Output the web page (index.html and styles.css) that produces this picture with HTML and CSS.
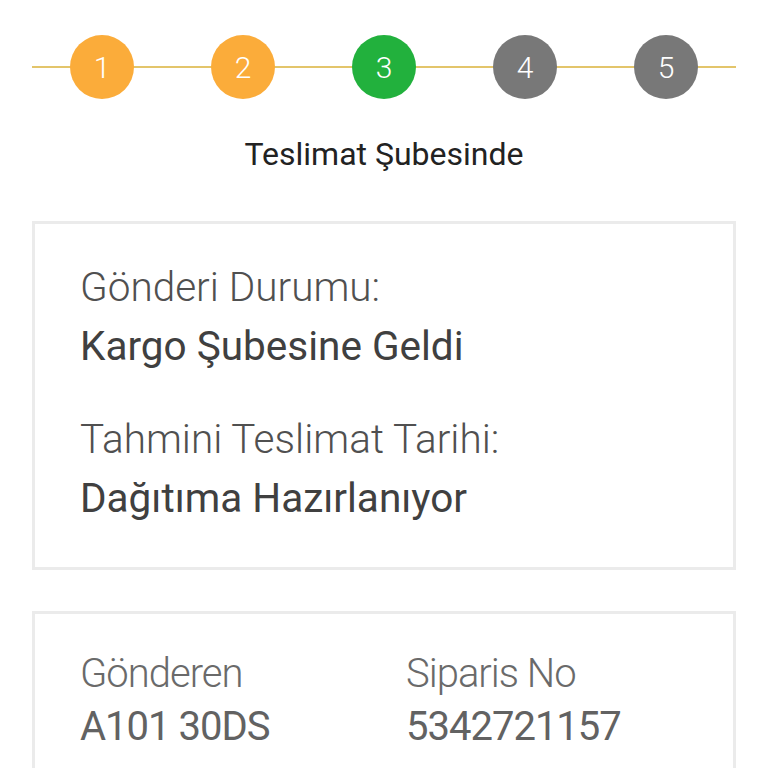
FILE: index.html
```html
<!DOCTYPE html>
<html lang="tr">
<head>
<meta charset="utf-8">
<link rel="stylesheet" href="styles.css">
</head>
<body>
<div class="page">
  <div class="stepper">
    <div class="step done">1</div>
    <div class="step done">2</div>
    <div class="step current">3</div>
    <div class="step todo">4</div>
    <div class="step todo">5</div>
  </div>
  <div class="status-title">Teslimat Şubesinde</div>
  <div class="card status-card">
    <div class="group">
      <div class="label">Gönderi Durumu:</div>
      <div class="value">Kargo Şubesine Geldi</div>
    </div>
    <div class="group">
      <div class="label">Tahmini Teslimat Tarihi:</div>
      <div class="value">Dağıtıma Hazırlanıyor</div>
    </div>
  </div>
  <div class="card info-card">
    <div class="col">
      <div class="info-label">Gönderen</div>
      <div class="info-value">A101 30DS</div>
    </div>
    <div class="col">
      <div class="info-label">Siparis No</div>
      <div class="info-value">5342721157</div>
    </div>
  </div>
</div>
</body>
</html>
```
FILE: styles.css
```css
html, body {
  margin: 0;
  padding: 0;
  background: #ffffff;
  font-family: Roboto, "Noto Sans", "Liberation Sans", sans-serif;
  overflow: hidden;
}
.page {
  padding: 35px 32px 0 32px;
}
.stepper {
  position: relative;
  display: flex;
  justify-content: space-between;
  padding: 0 38px;
}
.stepper::before {
  content: "";
  position: absolute;
  left: 0;
  right: 0;
  top: 31px;
  height: 2px;
  background: #e3c56b;
}
.step {
  position: relative;
  width: 64px;
  height: 64px;
  border-radius: 50%;
  color: #ffffff;
  font-size: 30px;
  font-weight: 300;
  display: flex;
  align-items: center;
  justify-content: center;
}
.step.done { background: #fbac3a; }
.step.current { background: #22b13d; }
.step.todo { background: #787878; }
.status-title {
  text-align: center;
  font-size: 32px;
  color: #222222;
  line-height: 40px;
  margin-top: 35px;
}
.card {
  border: 3px solid #ebebeb;
}
.status-card {
  margin-top: 47px;
  padding: 34px 45px 39px 45px;
}
.group + .group {
  margin-top: 34px;
}
.label {
  font-size: 40.5px;
  font-weight: 300;
  color: #505050;
  line-height: 59px;
}
.value {
  font-size: 40.5px;
  font-weight: 400;
  color: #404040;
  line-height: 59px;
}
.info-card {
  margin-top: 41px;
  padding: 37px 45px 80px 45px;
  display: grid;
  grid-template-columns: 326px 1fr;
}
.info-label {
  font-size: 40px;
  font-weight: 300;
  color: #6a6a6a;
  line-height: 46px;
  letter-spacing: -1px;
}
.info-value {
  font-size: 40px;
  font-weight: 400;
  color: #626262;
  line-height: 59px;
  letter-spacing: -1px;
}
```
